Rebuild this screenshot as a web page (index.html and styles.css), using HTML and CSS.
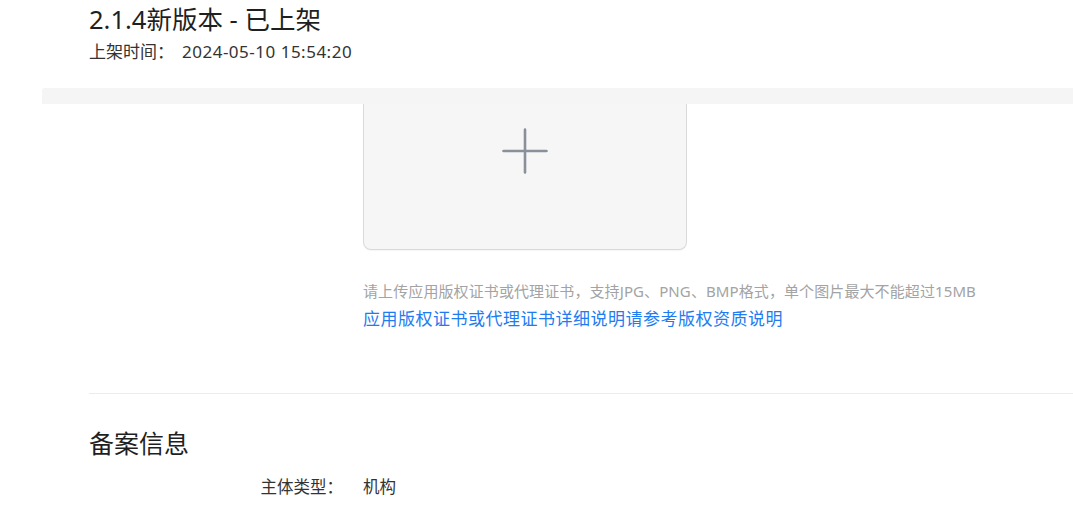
FILE: index.html
```html
<!DOCTYPE html>
<html lang="zh-CN">
<head>
<meta charset="utf-8">
<title>2.1.4新版本 - 已上架</title>
<link rel="stylesheet" href="styles.css">
</head>
<body>
<header class="head">
  <h1 class="title">2.1.4新版本 - 已上架</h1>
  <p class="meta"><span class="meta-label">上架时间：</span><span class="meta-value">2024-05-10 15:54:20</span></p>
</header>
<div class="strip"></div>
<main class="content">
  <div class="form-row">
    <div class="form-label"></div>
    <div class="form-field">
      <div class="upload-box">
        <svg class="plus" width="46" height="46" viewBox="0 0 46 46" aria-hidden="true">
          <path d="M23 1.5V44.5M1.5 23H44.5" stroke="#8a9099" stroke-width="2.6" stroke-linecap="round" fill="none"/>
        </svg>
      </div>
      <p class="hint">请上传应用版权证书或代理证书，支持JPG、PNG、BMP格式，单个图片最大不能超过15MB</p>
      <a class="link" href="#">应用版权证书或代理证书详细说明请参考版权资质说明</a>
    </div>
  </div>
  <hr class="divider">
  <h2 class="section-title">备案信息</h2>
  <div class="form-row info-row">
    <div class="form-label">主体类型：</div>
    <div class="form-field">机构</div>
  </div>
</main>
</body>
</html>
```
FILE: styles.css
```css
* { box-sizing: border-box; }
html, body {
  margin: 0;
  padding: 0;
  background: #ffffff;
}
body {
  font-family: "Noto Sans", "Noto Sans CJK SC", sans-serif;
  color: #222222;
  overflow: hidden;
}
.head {
  height: 88px;
  padding: 2px 0 0 89px;
}
.title {
  margin: 0;
  font-size: 25.5px;
  line-height: 34px;
  font-weight: 400;
  color: #1f1f1f;
}
.meta {
  margin: 0;
  font-size: 17px;
  line-height: 32px;
  color: #333333;
}
.meta-label { margin-right: 8px; }
.meta-value { letter-spacing: 0.5px; }
.strip {
  margin-left: 42px;
  height: 16px;
  background: #f5f5f5;
  border-top-left-radius: 3px;
}
.content {
  padding-left: 89px;
}
.form-row {
  display: grid;
  grid-template-columns: 274px 1fr;
}
.form-label {
  text-align: right;
  padding-right: 20px;
}
.upload-box {
  width: 324px;
  height: 146px;
  background: #f6f6f6;
  border: 1px solid #dadada;
  border-top: none;
  border-radius: 0 0 8px 8px;
  display: flex;
  justify-content: center;
  align-items: flex-start;
  padding-top: 24px;
  box-shadow: 0 1px 1px rgba(0,0,0,0.04);
}
.plus { display: block; }
.hint {
  margin: 30px 0 0;
  font-size: 15px;
  line-height: 22px;
  letter-spacing: 0.1px;
  color: #a3a3a3;
}
.link {
  display: block;
  margin-top: 5px;
  font-size: 17px;
  line-height: 24px;
  letter-spacing: 0.5px;
  color: #1d7cf2;
  text-decoration: none;
}
.divider {
  margin: 62px 0 0;
  border: none;
  border-top: 1px solid #ececec;
}
.section-title {
  margin: 32px 0 0;
  font-size: 25px;
  line-height: 34px;
  font-weight: 400;
  color: #1f1f1f;
}
.info-row {
  margin-top: 15px;
  font-size: 16.5px;
  line-height: 24px;
  color: #333333;
}
```
